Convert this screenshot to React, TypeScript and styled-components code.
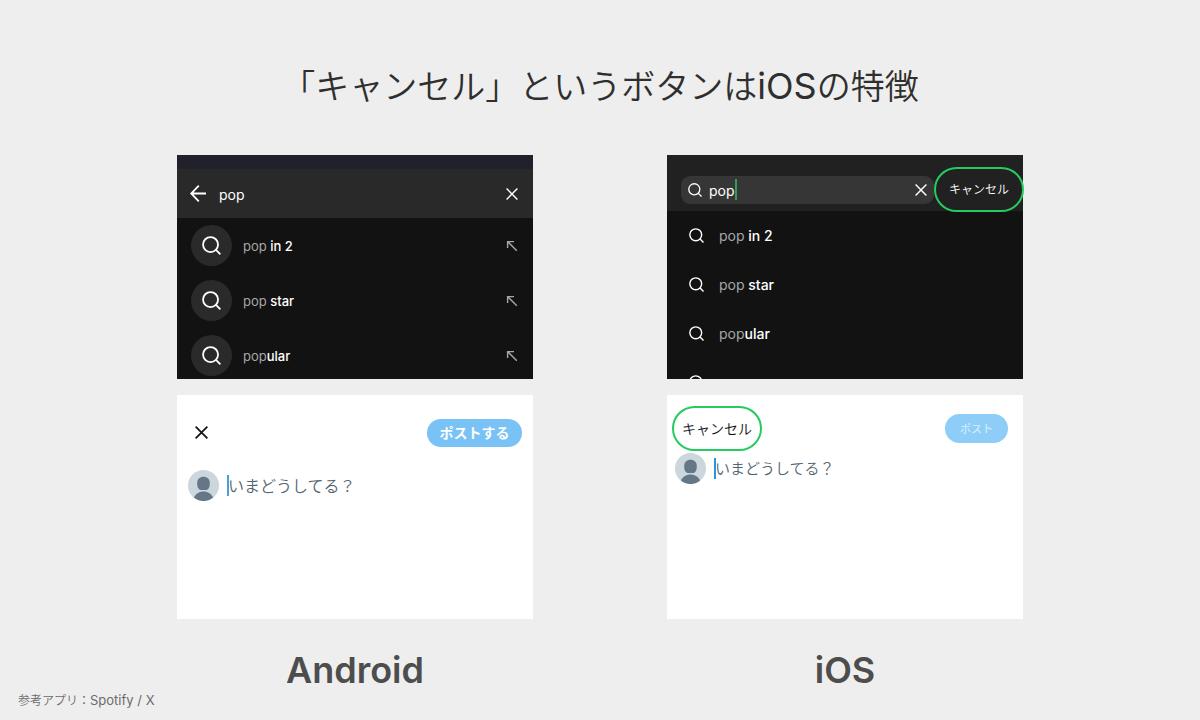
import React from "react";
import styled, { createGlobalStyle, css } from "styled-components";

const GlobalStyle = createGlobalStyle`
  *, *::before, *::after { box-sizing: border-box; }
  body {
    margin: 0;
    background: #eeeeee;
    color: #2f2f2f;
    font-family: Inter, "Noto Sans CJK JP", sans-serif;
  }
  h1, h2, p, ul { margin: 0; padding: 0; }
  ul { list-style: none; }
  button, input, textarea { font: inherit; color: inherit; }
  svg { display: block; flex: none; }
`;

const Page = styled.div`
  display: flex;
  flex-direction: column;
  min-height: 100vh;
  padding: 63px 18px 8px;
`;

const Title = styled.h1`
  font-size: 34px;
  line-height: 48px;
  font-weight: 350;
  text-align: center;
`;

const TitleLatin = styled.span`
  font-size: 36px;
  line-height: 36px;
  font-weight: 400;
`;

const Comparison = styled.main`
  display: grid;
  grid-template-columns: repeat(2, minmax(0, 356px));
  justify-content: center;
  column-gap: 134px;
  margin-top: 44px;
`;

const Platform = styled.section`
  display: flex;
  flex-direction: column;
  gap: 16px;
`;

const PlatformName = styled.h2`
  margin-top: 17px;
  font-size: 36px;
  line-height: 36px;
  font-weight: 600;
  color: #4d4d4d;
  text-align: center;
`;

const Source = styled.footer`
  margin-top: auto;
  font-size: 12px;
  line-height: 22px;
  font-weight: 350;
  color: #6b6b6b;
`;

const AppNames = styled.span`
  font-size: 13px;
  font-weight: 400;
`;

const SearchPanel = styled.div`
  height: 224px;
  display: flex;
  flex-direction: column;
  background: #121212;
  color: #ffffff;
`;

const StatusBar = styled.div`
  height: 14px;
  background: #21212b;
`;

const AndroidSearchBar = styled.form`
  display: flex;
  align-items: center;
  gap: 12px;
  height: 49px;
  padding: 0 15px 0 13px;
  background: #292929;
  font-size: 14px;
`;

const IosSearchBar = styled.form`
  display: flex;
  align-items: center;
  height: 56px;
  padding: 13px 0 0 14px;
  margin-right: -1px;
  background: linear-gradient(to left, transparent 1px, #212121 1px);
`;

const SearchField = styled.div`
  flex: 1;
  min-width: 0;
  display: flex;
  align-items: center;
  height: 28px;
  padding: 0 7px;
  border-radius: 9px;
  background: #363636;
  font-size: 14px;
`;

const QueryInput = styled.input<{ $fit?: boolean }>`
  min-width: 0;
  padding: 1px 0 0;
  border: 0;
  outline: 0;
  background: transparent;
  ${({ $fit }) =>
    $fit
      ? css`
          field-sizing: content;
          margin-left: 7px;
        `
      : css`
          flex: 1;
        `}
`;

const IconButton = styled.button<{ $end?: boolean }>`
  display: flex;
  padding: 0;
  border: 0;
  background: transparent;
  cursor: pointer;
  margin-left: ${({ $end }) => ($end ? "auto" : "0")};
`;

const Caret = styled.span<{ $color: string }>`
  flex: none;
  width: 2px;
  height: 21px;
  background: ${({ $color }) => $color};
`;

const HighlightedButton = styled.button<{ $size: number }>`
  position: relative;
  z-index: 1;
  flex: none;
  width: 90px;
  height: 45px;
  padding: 0 0 2px;
  border: 2px solid #24cb5e;
  border-radius: 23px;
  background: transparent;
  font-size: ${({ $size }) => $size}px;
  font-weight: 350;
  white-space: nowrap;
  cursor: pointer;
`;

const Suggestions = styled.ul`
  flex: 1;
  min-height: 0;
  overflow: hidden;
`;

const Suggestion = styled.li<{ $os: "android" | "ios" }>`
  display: flex;
  align-items: center;
  ${({ $os }) =>
    $os === "android"
      ? css`
          gap: 11px;
          height: 55px;
          padding: 0 15px 0 14px;
          font-size: 13px;
        `
      : css`
          gap: 15px;
          height: 49px;
          padding: 0 22px;
          font-size: 14px;
        `}
`;

const SuggestionText = styled.span`
  flex: 1;
  font-weight: 500;
`;

const Typed = styled.span`
  font-weight: 400;
  color: #a7a7a7;
`;

const IconDisc = styled.span`
  display: flex;
  align-items: center;
  justify-content: center;
  width: 41px;
  height: 41px;
  border-radius: 50%;
  background: #2a2a2a;
`;

const PostPanel = styled.form`
  height: 224px;
  background: #ffffff;
  color: #0f1419;
`;

const PostBar = styled.div<{ $os: "android" | "ios" }>`
  display: flex;
  align-items: center;
  justify-content: space-between;
  ${({ $os }) =>
    $os === "android"
      ? css`
          height: 75px;
          padding: 0 11px 0 18px;
        `
      : css`
          height: 58px;
          padding: 9px 15px 0 5px;
        `}
`;

const PostButton = styled.button<{ $os: "android" | "ios" }>`
  padding: 0 0 2px;
  border: 0;
  border-radius: 15px;
  color: #ffffff;
  cursor: pointer;
  ${({ $os }) =>
    $os === "android"
      ? css`
          width: 95px;
          height: 28px;
          background: #78c2f5;
          font-size: 14px;
          font-weight: 700;
        `
      : css`
          width: 63px;
          height: 29px;
          background: #8ecdf8;
          color: #cdeafd;
          font-size: 11px;
          font-weight: 500;
        `}
`;

const Compose = styled.label<{ $os: "android" | "ios" }>`
  display: flex;
  align-items: center;
  height: 31px;
  padding-left: ${({ $os }) => ($os === "android" ? 11 : 8)}px;
  font-size: ${({ $os }) => ($os === "android" ? 16 : 15)}px;
  font-weight: 350;

  ${Caret} {
    margin: 0 -1px 0 8px;
  }
`;

const PostInput = styled.input`
  flex: 1;
  min-width: 0;
  padding: 0;
  border: 0;
  outline: 0;
  background: transparent;

  &::placeholder {
    color: #536471;
    opacity: 1;
  }
`;

const SearchIcon = ({ size, stroke = 1.7 }: { size: number; stroke?: number }) => (
  <svg width={size} height={size} viewBox="0 0 18 18" fill="none" stroke="currentColor" strokeWidth={stroke} aria-hidden="true">
    <circle cx="8.1" cy="8.1" r="7.1" />
    <path d="M13 13 17.4 17.4" />
  </svg>
);

const CloseIcon = ({ size, stroke = 1.7 }: { size: number; stroke?: number }) => (
  <svg width={size} height={size} viewBox="0 0 14 14" fill="none" stroke="currentColor" strokeWidth={stroke} aria-hidden="true">
    <path d="M.7 .7 13.3 13.3M13.3 .7 .7 13.3" />
  </svg>
);

const BackIcon = () => (
  <svg width="17" height="17" viewBox="0 0 17 17" fill="none" stroke="currentColor" strokeWidth="1.8" aria-hidden="true">
    <path d="M8.8 .7 1.2 8.5 8.8 16.3M1.2 8.5H16" />
  </svg>
);

const FillArrowIcon = () => (
  <svg width="12" height="12" viewBox="0 0 12 12" fill="none" stroke="#a7a7a7" strokeWidth="1.4" aria-hidden="true">
    <path d="M1.6 8V1.6H8M1.6 1.6 10.8 10.8" />
  </svg>
);

const Avatar = () => (
  <svg width="31" height="31" viewBox="0 0 31 31" aria-hidden="true">
    <circle cx="15.5" cy="15.5" r="15.5" fill="#ccd6dd" />
    <path d="M9.2 13.2C9.2 9 11.7 6.8 15.5 6.8S21.8 9 21.8 13.2C21.8 15.9 21.3 17.5 20.5 18.6 19.7 19.7 18.8 20.1 17.5 20.1H13.5C12.2 20.1 11.3 19.7 10.5 18.6 9.7 17.5 9.2 15.9 9.2 13.2Z" fill="#657786" />
    <path d="M6 27.8C7.4 24 11 21.6 15.5 21.6S23.6 24 25 27.8A15.5 15.5 0 0 1 6 27.8Z" fill="#657786" />
  </svg>
);

const suggestions = [" in 2", " star", "ular"];

export default function App() {
  return (
    <>
      <GlobalStyle />
      <Page>
        <Title>
          「キャンセル」というボタンは<TitleLatin>iOS</TitleLatin>の特徴
        </Title>
        <Comparison>
          <Platform>
            <SearchPanel>
              <StatusBar />
              <AndroidSearchBar>
                <IconButton type="button" aria-label="戻る">
                  <BackIcon />
                </IconButton>
                <QueryInput aria-label="検索" defaultValue="pop" />
                <IconButton type="button" aria-label="消去">
                  <CloseIcon size={12} />
                </IconButton>
              </AndroidSearchBar>
              <Suggestions>
                {suggestions.map((rest) => (
                  <Suggestion key={rest} $os="android">
                    <IconDisc>
                      <SearchIcon size={19} />
                    </IconDisc>
                    <SuggestionText>
                      <Typed>pop</Typed>
                      {rest}
                    </SuggestionText>
                    <FillArrowIcon />
                  </Suggestion>
                ))}
              </Suggestions>
            </SearchPanel>
            <PostPanel>
              <PostBar $os="android">
                <IconButton type="button" aria-label="閉じる">
                  <CloseIcon size={13} stroke={1.9} />
                </IconButton>
                <PostButton type="button" $os="android">ポストする</PostButton>
              </PostBar>
              <Compose $os="android">
                <Avatar />
                <Caret $color="#4a9fdc" />
                <PostInput aria-label="ポスト" placeholder="いまどうしてる？" />
              </Compose>
            </PostPanel>
            <PlatformName>Android</PlatformName>
          </Platform>

          <Platform>
            <SearchPanel>
              <IosSearchBar>
                <SearchField>
                  <SearchIcon size={14} />
                  <QueryInput $fit size={3} aria-label="検索" defaultValue="pop" />
                  <Caret $color="#2f9e5c" />
                  <IconButton type="button" aria-label="消去" $end>
                    <CloseIcon size={12} />
                  </IconButton>
                </SearchField>
                <HighlightedButton type="button" $size={12}>キャンセル</HighlightedButton>
              </IosSearchBar>
              <Suggestions>
                {suggestions.map((rest) => (
                  <Suggestion key={rest} $os="ios">
                    <SearchIcon size={15} />
                    <SuggestionText>
                      <Typed>pop</Typed>
                      {rest}
                    </SuggestionText>
                  </Suggestion>
                ))}
                <Suggestion $os="ios">
                  <SearchIcon size={15} />
                </Suggestion>
              </Suggestions>
            </SearchPanel>
            <PostPanel>
              <PostBar $os="ios">
                <HighlightedButton type="button" $size={14}>キャンセル</HighlightedButton>
                <PostButton type="button" $os="ios">ポスト</PostButton>
              </PostBar>
              <Compose $os="ios">
                <Avatar />
                <Caret $color="#2b95e0" />
                <PostInput aria-label="ポスト" placeholder="いまどうしてる？" />
              </Compose>
            </PostPanel>
            <PlatformName>iOS</PlatformName>
          </Platform>
        </Comparison>
        <Source>
          参考アプリ：<AppNames>Spotify / X</AppNames>
        </Source>
      </Page>
    </>
  );
}
